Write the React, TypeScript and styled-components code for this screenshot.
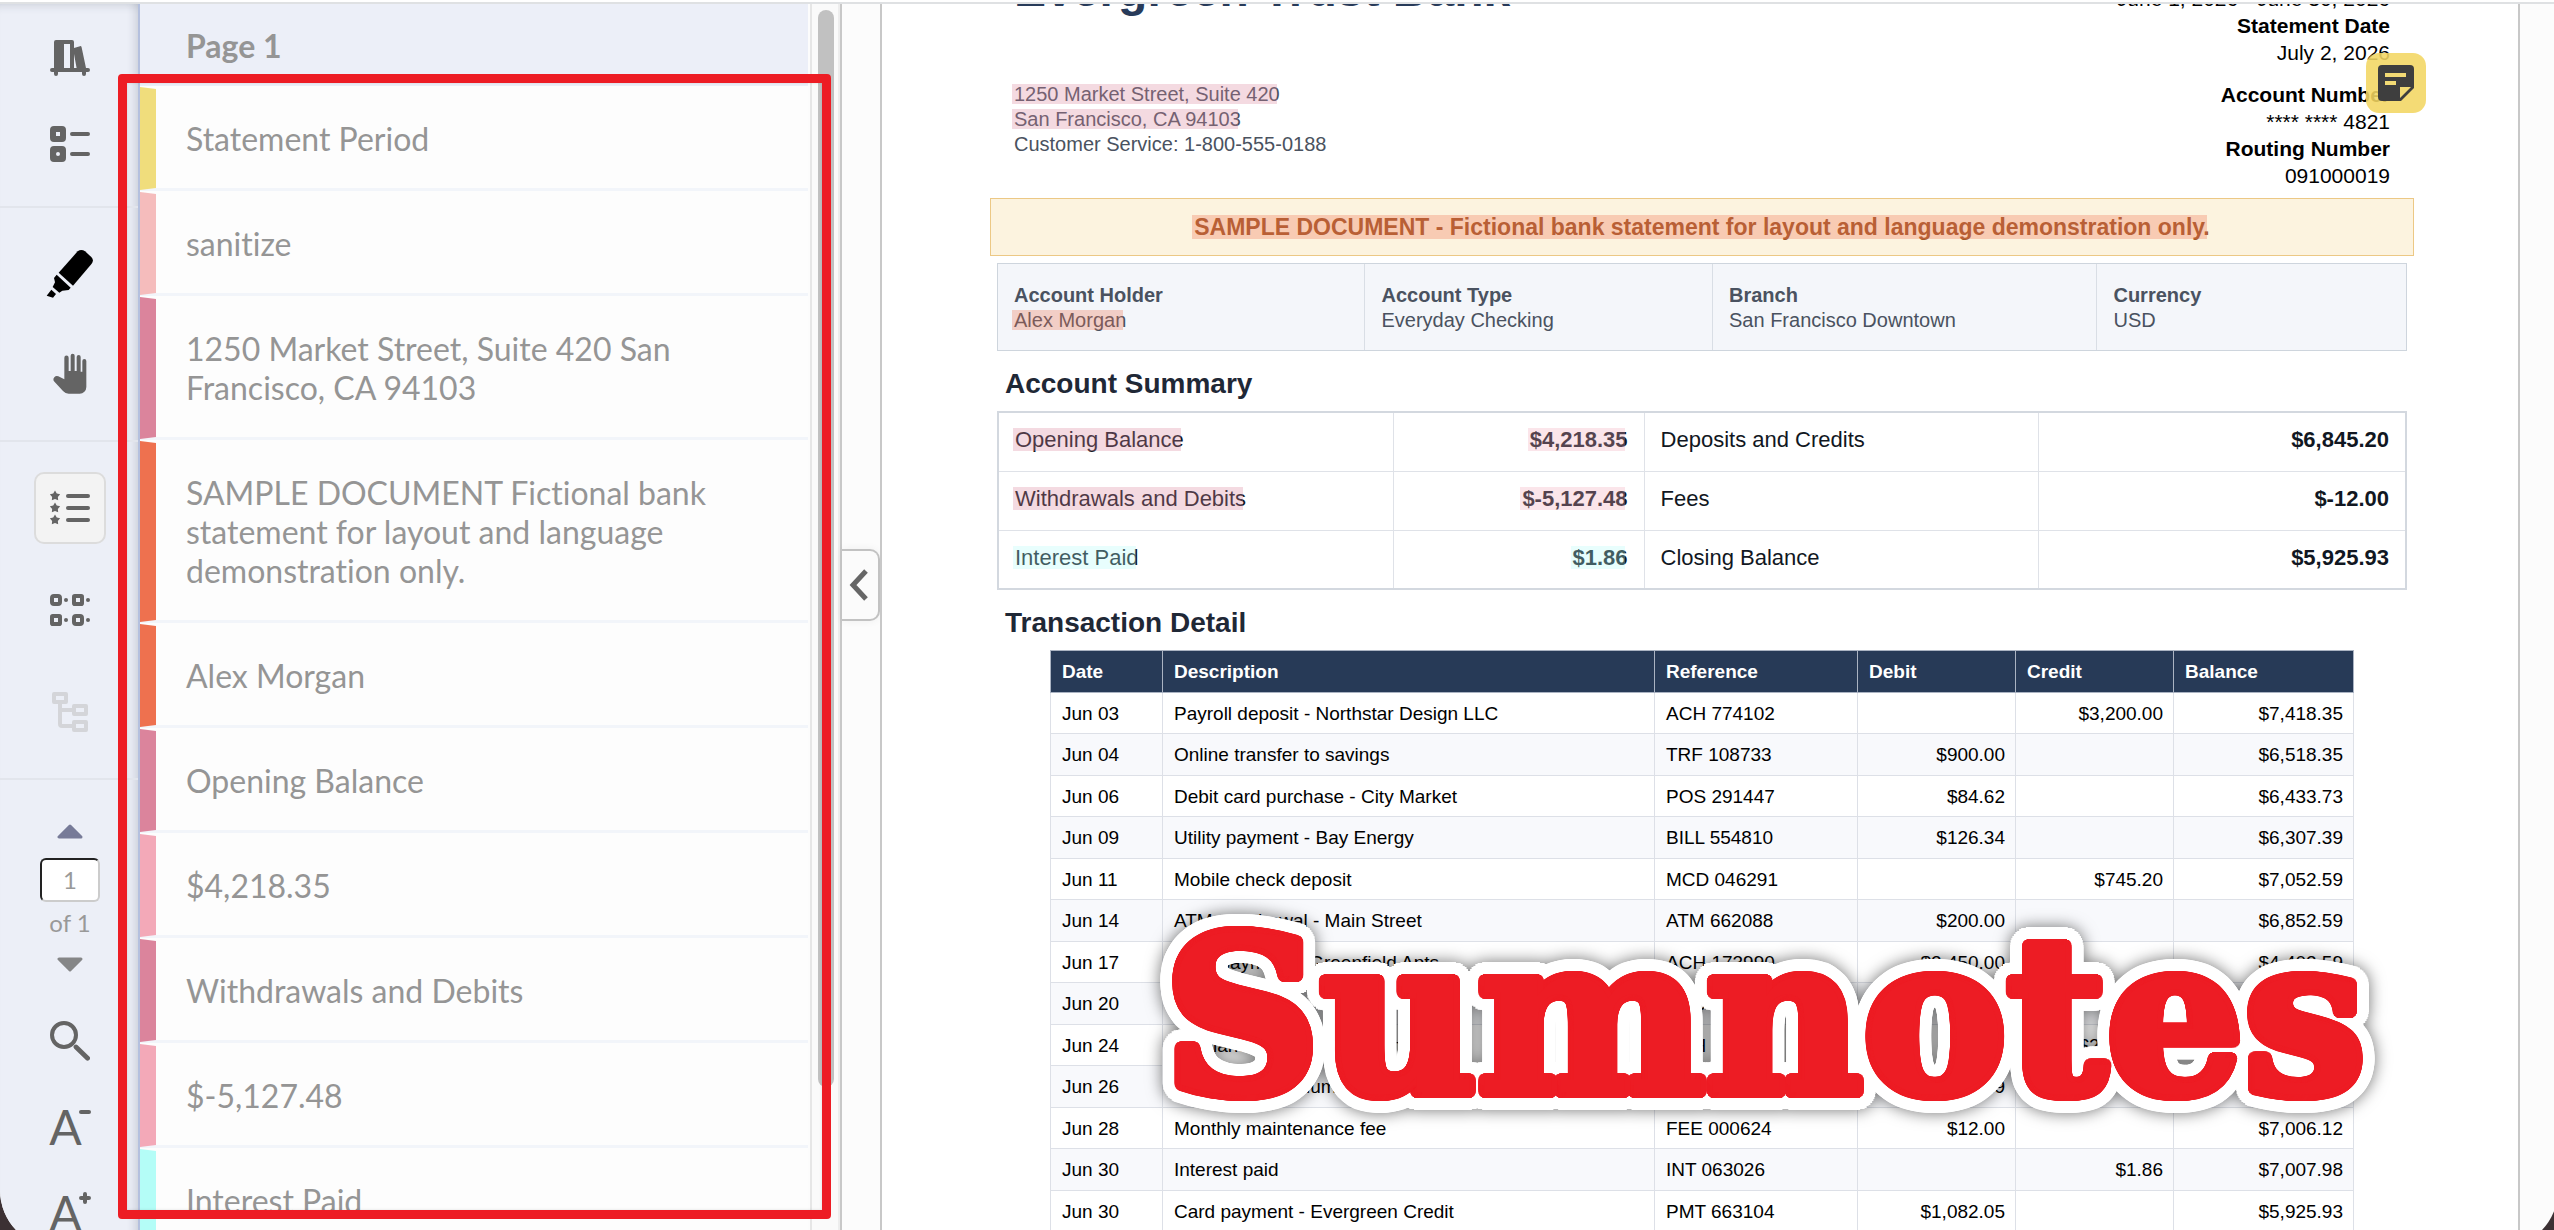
import React from 'react';
import styled, { createGlobalStyle } from 'styled-components';

const ui = "Lato, 'Open Sans', sans-serif";
const doc = "'Liberation Sans', Arial, sans-serif";

const GlobalStyle = createGlobalStyle`
  *, *::before, *::after { box-sizing: border-box; }
  body { margin: 0; background: #3c3134; font-family: ${ui}; font-variant-ligatures: none; }
  button, input { font: inherit; color: inherit; padding: 0; }
  h1, h2, h3, p, dl, dd, ul { margin: 0; padding: 0; }
`;

const Screen = styled.div`
  position: relative;
  height: 100vh;
  overflow: hidden;
`;

const Window = styled.div`
  display: flex;
  height: calc(100vh + 18px);
  margin-right: -4px;
  overflow: hidden;
  border-radius: 0 0 58px 58px;
  background: #fcfcfc;
  border-top: 2px solid #fff;
`;

const Body = styled.div`
  display: flex;
  flex: 1;
  min-width: 0;
  border-top: 2px solid #dfe1e3;
`;

/* ---------- tool bar ---------- */

const Toolbar = styled.nav`
  flex: none;
  width: 140px;
  background: #eceff7;
  border-right: 2px solid #b4c0de;
  box-shadow: inset -9px 0 9px -6px rgba(40, 50, 70, 0.16), inset 0 9px 9px -7px rgba(40, 50, 70, 0.14);
  color: #646464;
`;

const ToolGroup = styled.div<{ $top: number; $gap: number; $bottom?: number }>`
  display: flex;
  flex-direction: column;
  align-items: center;
  gap: ${p => p.$gap}px;
  padding: ${p => p.$top}px 0 ${p => p.$bottom ?? 30}px 2px;
  border-bottom: ${p => (p.$bottom === 0 ? 'none' : '2px solid #e2e5ec')};
`;

const ToolButton = styled.button<{ $active?: boolean; $color?: string }>`
  display: flex;
  align-items: center;
  justify-content: center;
  width: 72px;
  height: 72px;
  border: 2px solid ${p => (p.$active ? '#dcdcdc' : 'transparent')};
  border-radius: 10px;
  background: ${p => (p.$active ? '#f3f3f3' : 'transparent')};
  color: ${p => p.$color ?? 'inherit'};
`;

const Pager = styled.div`
  display: flex;
  flex-direction: column;
  align-items: center;
  gap: 7px;
  padding: 31px 0 21px 2px;
  font-size: 24px;
  line-height: 28px;
  color: #999;
`;

const ArrowButton = styled.button<{ $color: string }>`
  display: flex;
  align-items: center;
  justify-content: center;
  width: 60px;
  height: 40px;
  border: 0;
  background: none;
  color: ${p => p.$color};
`;

const PageInput = styled.input`
  width: 60px;
  height: 44px;
  padding-bottom: 2px;
  border: 2px solid #222;
  border-right-color: #ccc;
  border-bottom-color: #ccc;
  border-radius: 6px;
  background: #fff;
  text-align: center;
`;

const LetterIcon = styled.span`
  display: flex;
  align-items: flex-start;
  font-size: 48px;
  line-height: 48px;
  svg { margin: 3px 0 0 -3px; }
`;

/* ---------- annotation list ---------- */

const Panel = styled.aside`
  display: flex;
  flex: none;
  width: 702px;
  overflow: hidden;
  border-right: 2px solid #c8c8c8;
`;

const List = styled.div`
  flex: 1;
  min-width: 0;
  font-size: 32px;
  line-height: 39px;
  color: #959595;
`;

const ListHeader = styled.h2`
  padding: 22px 46px 21px;
  background: #eceff8;
  font-size: 32px;
  line-height: 39px;
`;

const Items = styled.ul`
  list-style: none;
`;

const Item = styled.li<{ $color: string }>`
  display: flex;
  background: #fdfdfd;
  border-bottom: 3px solid #f2f5fa;
  &::before {
    content: '';
    flex: none;
    width: 16px;
    margin: 1px 0 -2px;
    background: ${p => p.$color};
    clip-path: polygon(0 0, 100% 2px, 100% calc(100% - 2px), 0 100%);
  }
`;

const ItemText = styled.p`
  padding: 33px 46px 30px 30px;
`;

const ScrollTrack = styled.div`
  flex: none;
  width: 30px;
  padding: 6px 0 0 6px;
  margin-left: 2px;
  border-left: 2px solid #e6e6e6;
  border-right: 2px solid #ededed;
  background: #fafafa;
`;

const ScrollThumb = styled.div`
  width: 16px;
  height: 87%;
  border-radius: 8px;
  background: #c1c1c1;
`;

const Gutter = styled.div`
  flex: none;
  width: 38px;
  padding-top: 545px;
`;

const CollapseButton = styled.button`
  display: flex;
  align-items: center;
  justify-content: center;
  width: 38px;
  height: 72px;
  padding-right: 2px;
  border: 2px solid #c2c2c2;
  border-left: 0;
  border-radius: 0 10px 10px 0;
  background: #fbfbfb;
  color: #666;
  box-shadow: 0 0 8px rgba(0, 0, 0, 0.06);
`;

/* ---------- document ---------- */

const Viewer = styled.main`
  flex: 1;
  min-width: 0;
  overflow: hidden;
  padding-right: 38px;
`;

const Page = styled.article`
  position: relative;
  margin-top: -106px;
  padding: 60px 111px 80px 115px;
  border: 2px solid #c8c8c8;
  border-top: 0;
  background: #fff;
  font-family: ${doc};
  font-size: 20px;
  line-height: 25px;
  color: #4a5260;
`;

const DocHeader = styled.header`
  display: flex;
  justify-content: space-between;
  padding: 0 17px 9px;
`;

const BankName = styled.h1`
  margin: 4px 0 64px;
  font-size: 48px;
  line-height: 56px;
  color: #283b5a;
`;

const Meta = styled.dl`
  font-size: 21px;
  line-height: 27px;
  color: #000;
  text-align: right;
  dt { font-weight: bold; }
`;

const MetaGroup = styled.div`
  & + & { margin-top: 15px; }
`;

const Mark = styled.mark<{ $tint: string }>`
  position: relative;
  background: none;
  color: inherit;
  &::after {
    content: '';
    position: absolute;
    inset: 1px 3px 1px -2px;
    background: ${p => p.$tint};
  }
`;

const NotePin = styled.button`
  position: absolute;
  top: 155px;
  right: 92px;
  display: flex;
  align-items: center;
  justify-content: center;
  width: 60px;
  height: 60px;
  border: 0;
  border-radius: 13px;
  background: rgba(242, 214, 98, 0.88);
  color: #3e3e3e;
`;

const Banner = styled.p`
  margin: 0 -7px 7px;
  padding: 15px 0;
  border: 1px solid #ecc885;
  background: #fcf3df;
  font-size: 23px;
  line-height: 26px;
  font-weight: bold;
  text-align: center;
  color: #a2582a;
`;

const InfoGrid = styled.dl`
  display: grid;
  grid-template-columns: 367fr 348fr 385fr 310fr;
  border: 1px solid #ced5dd;
  background: #f4f6fa;
  dt { font-weight: bold; }
`;

const InfoCell = styled.div`
  padding: 19px 16px 17px;
  & + & { border-left: 1px solid #d9dee5; }
`;

const SectionTitle = styled.h3`
  margin: 17px 8px 11px;
  font-size: 28px;
  line-height: 32px;
  color: #1f2836;
`;

const SummaryTable = styled.table`
  width: 100%;
  table-layout: fixed;
  border-collapse: collapse;
  border: 2px solid #d3d8df;
  font-size: 22px;
  line-height: 26px;
  color: #111722;
  th, td { height: 59px; padding: 0 16px 3px; border: 1px solid #dfe2e8; }
  th { font-weight: normal; text-align: left; }
  td { font-weight: bold; text-align: right; }
`;

const LedgerWrap = styled.div`
  padding: 0 53px;
`;

const Ledger = styled.table`
  width: 100%;
  table-layout: fixed;
  border-collapse: collapse;
  font-size: 19px;
  line-height: 22px;
  color: #000;
  th, td { height: 42px; padding: 1px 10px 0 11px; border: 1px solid #dde0e7; text-align: left; white-space: nowrap; }
  tbody tr:nth-child(even) { background: #f8f9fc; }
  tbody tr:nth-child(odd) td { height: 41px; }
  thead th { background: #273a57; color: #fff; border-color: #aab3c2; }
  td:nth-child(n + 4) { text-align: right; }
`;

/* ---------- overlays ---------- */

const Frame = styled.div`
  position: absolute;
  left: 118px;
  top: 74px;
  bottom: 11px;
  width: 713px;
  border: 9px solid #ed1c24;
  border-radius: 4px;
  pointer-events: none;
  box-shadow: inset 0 0 3px rgba(0, 0, 0, 0.12);
`;

/* A ring of hard shadows thickens the letters evenly and rounds their corners. */
const ring = (radius: number, color: string) =>
  Array.from({ length: 48 }, (_, i) => {
    const a = (i / 48) * Math.PI * 2;
    return `${(Math.cos(a) * radius).toFixed(1)}px ${(Math.sin(a) * radius).toFixed(1)}px 0 ${color}`;
  }).join(', ');

const Wordmark = styled.div`
  position: absolute;
  left: 1164px;
  bottom: 94px;
  font-family: 'DejaVu Serif', serif;
  font-weight: bold;
  font-size: 216px;
  line-height: 240px;
  color: #ed1c24;
  text-shadow: ${ring(6, '#ed1c24')}, ${ring(18, '#fff')};
  filter: drop-shadow(0 0 8px rgba(0, 0, 0, 0.55));
  pointer-events: none;
`;

/* ---------- icons ---------- */

const BooksIcon = () => (
  <svg width="40" height="40" viewBox="0 0 20 20" fill="currentColor">
    <path fillRule="evenodd" d="M3 1h8a1 1 0 0 1 1 1v3l3-.9q.6-.2.8.5L18 15h1a1 1 0 0 1 0 2h-1v1a1 1 0 0 1-2 0v-1H4v1a1 1 0 0 1-2 0v-1H1a1 1 0 0 1 0-2h1V2a1 1 0 0 1 1-1zM7 3v12h3V3zM12 8v7h1.3z" />
  </svg>
);

const ListIcon = () => (
  <svg width="40" height="40" viewBox="0 0 20 20" fill="currentColor">
    <path fillRule="evenodd" d="M2 1h4a2 2 0 0 1 2 2v4a2 2 0 0 1-2 2H2a2 2 0 0 1-2-2V3a2 2 0 0 1 2-2zM3 4v2h2V4zM2 11h4a2 2 0 0 1 2 2v4a2 2 0 0 1-2 2H2a2 2 0 0 1-2-2v-4a2 2 0 0 1 2-2zM4 14a1 1 0 1 0 0 2a1 1 0 0 0 0-2z" />
    <path d="M11 5h8M11 15h8" stroke="currentColor" strokeWidth="2" strokeLinecap="round" />
  </svg>
);

const HighlighterIcon = () => (
  <svg width="48" height="50" viewBox="139 747 144 150" fill="currentColor">
    <path d="M234 754Q245 746 256 754L275 771Q284 781 276 791L220 857L177 818Z" />
    <path d="M171 824L213 863L207 870L188 872L179 878L159 861L166 847L163 834Z" />
    <path d="M155 869L169 882L160 893L141 887Z" />
  </svg>
);

const HandIcon = () => (
  <svg width="34" height="42" viewBox="158 1060 102 126" fill="currentColor">
    <path d="M192 1074a6 6 0 0 1 13 0v40h6v-46a6 6 0 0 1 12 0v46h6v-42a6 6 0 0 1 12 0v44h5v-32a6 6 0 0 1 12 0v78a20 20 0 0 1-20 20h-33q-10 0-17-8l-27-29q-4-6 1-12t12-3l18 9z" />
  </svg>
);

const star = (y: number) =>
  Array.from({ length: 10 }, (_, i) => {
    const r = i % 2 ? 1.5 : 2.7;
    const a = -Math.PI / 2 + (i * Math.PI) / 5;
    return `${2.5 + r * Math.cos(a)},${y + r * Math.sin(a)}`;
  }).join(' ');

const StarListIcon = () => (
  <svg width="40" height="40" viewBox="0 0 20 20" fill="currentColor">
    {[4, 10, 16].map(y => (
      <g key={y}>
        <polygon points={star(y)} />
        <path d={`M9 ${y}h10`} stroke="currentColor" strokeWidth="2" strokeLinecap="round" />
      </g>
    ))}
  </svg>
);

const GridIcon = () => (
  <svg width="40" height="40" viewBox="0 0 20 20" fill="none" stroke="currentColor" strokeWidth="2">
    {[[1, 3], [12, 3], [1, 13], [12, 13]].map(([x, y], i) => (
      <g key={i}>
        <rect x={x} y={y} width="4" height="4" rx={i % 3 ? 0.4 : 1} />
        <circle cx={x + 7} cy={y + 2} r="1" fill="currentColor" stroke="none" />
      </g>
    ))}
  </svg>
);

const TreeIcon = () => (
  <svg width="40" height="40" viewBox="0 0 20 20" fill="none" stroke="currentColor" strokeWidth="2" strokeLinejoin="round">
    <rect x="2" y="1" width="6" height="4" />
    <rect x="12" y="7" width="6" height="4" />
    <rect x="12" y="15" width="6" height="4" />
    <path d="M5 5v11q0 1 1 1h6M5 9h7" />
  </svg>
);

const Triangle = ({ down }: { down?: boolean }) => (
  <svg width="26" height="15" viewBox="0 0 26 15">
    <path d={down ? 'M2 2H24L13 13Z' : 'M2 13H24L13 2Z'} fill="currentColor" stroke="currentColor" strokeWidth="3" strokeLinejoin="round" />
  </svg>
);

const SearchIcon = () => (
  <svg width="40" height="40" viewBox="0 0 20 20" fill="none" stroke="currentColor" strokeLinecap="round">
    <circle cx="7" cy="7" r="6" strokeWidth="2" />
    <path d="M13 13l5.8 5.6" strokeWidth="2.4" />
  </svg>
);

const Sign = ({ plus }: { plus?: boolean }) => (
  <svg width="12" height="12" viewBox="0 0 12 12" stroke="currentColor" strokeWidth="4" strokeLinecap="round">
    <path d={plus ? 'M2 6h8M6 2v8' : 'M2 6h8'} />
  </svg>
);

const Chevron = () => (
  <svg width="20" height="32" viewBox="0 0 20 32" fill="none" stroke="currentColor" strokeWidth="5">
    <path d="M17 2L4 16L17 30" />
  </svg>
);

const NoteIcon = () => (
  <svg width="38" height="38" viewBox="0 0 38 38">
    <path fill="currentColor" d="M5 1h28a4 4 0 0 1 4 4v19L24 37H5a4 4 0 0 1-4-4V5a4 4 0 0 1 4-4z" />
    <path fill="#f2da74" d="M8 9h21v4H8zM8 17h11v4H8zM23 23h11L23 34z" />
  </svg>
);

/* ---------- data ---------- */

const annotations: [string, string][] = [
  ['Statement Period', '#f0dd7c'],
  ['sanitize', '#f5bcbc'],
  ['1250 Market Street, Suite 420 San Francisco, CA 94103', '#db849c'],
  ['SAMPLE DOCUMENT Fictional bank statement for layout and language demonstration only.', '#ee714f'],
  ['Alex Morgan', '#ee714f'],
  ['Opening Balance', '#db849c'],
  ['$4,218.35', '#f3a9b8'],
  ['Withdrawals and Debits', '#db849c'],
  ['$-5,127.48', '#f3a9b8'],
  ['Interest Paid', '#b4fdf7'],
];

const rose = 'rgba(219, 132, 156, 0.3)';
const pink = 'rgba(243, 169, 184, 0.3)';
const coral = 'rgba(238, 113, 79, 0.3)';
const aqua = 'rgba(180, 253, 247, 0.3)';

const summary: [string, string, string, string, string, string][] = [
  ['Opening Balance', '$4,218.35', 'Deposits and Credits', '$6,845.20', rose, pink],
  ['Withdrawals and Debits', '$-5,127.48', 'Fees', '$-12.00', rose, pink],
  ['Interest Paid', '$1.86', 'Closing Balance', '$5,925.93', aqua, aqua],
];

const ledger = [
  ['Jun 03', 'Payroll deposit - Northstar Design LLC', 'ACH 774102', '', '$3,200.00', '$7,418.35'],
  ['Jun 04', 'Online transfer to savings', 'TRF 108733', '$900.00', '', '$6,518.35'],
  ['Jun 06', 'Debit card purchase - City Market', 'POS 291447', '$84.62', '', '$6,433.73'],
  ['Jun 09', 'Utility payment - Bay Energy', 'BILL 554810', '$126.34', '', '$6,307.39'],
  ['Jun 11', 'Mobile check deposit', 'MCD 046291', '', '$745.20', '$7,052.59'],
  ['Jun 14', 'ATM withdrawal - Main Street', 'ATM 662088', '$200.00', '', '$6,852.59'],
  ['Jun 17', 'Rent payment - Greenfield Apts', 'ACH 173990', '$2,450.00', '', '$4,402.59'],
  ['Jun 20', 'Grocery store', 'POS 118204', '$86.18', '', '$4,316.41'],
  ['Jun 24', 'Freelance payment - Bloom Studio', 'ACH 420815', '', '$2,900.00', '$7,216.41'],
  ['Jun 26', 'Insurance premium', 'INS 552018', '$198.29', '', '$7,018.12'],
  ['Jun 28', 'Monthly maintenance fee', 'FEE 000624', '$12.00', '', '$7,006.12'],
  ['Jun 30', 'Interest paid', 'INT 063026', '', '$1.86', '$7,007.98'],
  ['Jun 30', 'Card payment - Evergreen Credit', 'PMT 663104', '$1,082.05', '', '$5,925.93'],
];

export default function App() {
  return (
    <Screen>
      <GlobalStyle />
      <Window>
        <Body>
          <Toolbar aria-label="Tools">
            <ToolGroup $top={18} $gap={14} $bottom={26}>
              <ToolButton aria-label="Library"><BooksIcon /></ToolButton>
              <ToolButton aria-label="Contents"><ListIcon /></ToolButton>
            </ToolGroup>
            <ToolGroup $top={30} $gap={28}>
              <ToolButton aria-label="Highlight" $color="#000"><HighlighterIcon /></ToolButton>
              <ToolButton aria-label="Pan"><HandIcon /></ToolButton>
            </ToolGroup>
            <ToolGroup $top={30} $gap={30}>
              <ToolButton aria-label="Annotation list" $active><StarListIcon /></ToolButton>
              <ToolButton aria-label="Grid"><GridIcon /></ToolButton>
              <ToolButton aria-label="Outline" $color="#d4d5d9"><TreeIcon /></ToolButton>
            </ToolGroup>
            <Pager>
              <ArrowButton aria-label="Previous page" $color="#777b98"><Triangle /></ArrowButton>
              <PageInput aria-label="Page number" defaultValue="1" />
              <span>of 1</span>
              <ArrowButton aria-label="Next page" $color="#858687"><Triangle down /></ArrowButton>
            </Pager>
            <ToolGroup $top={0} $gap={14} $bottom={0}>
              <ToolButton aria-label="Search"><SearchIcon /></ToolButton>
              <ToolButton aria-label="Smaller text"><LetterIcon>A<Sign /></LetterIcon></ToolButton>
              <ToolButton aria-label="Larger text"><LetterIcon>A<Sign plus /></LetterIcon></ToolButton>
            </ToolGroup>
          </Toolbar>

          <Panel>
            <List>
              <ListHeader>Page 1</ListHeader>
              <Items>
                {annotations.map(([text, color]) => (
                  <Item key={text} $color={color}><ItemText>{text}</ItemText></Item>
                ))}
              </Items>
            </List>
            <ScrollTrack><ScrollThumb /></ScrollTrack>
          </Panel>

          <Gutter>
            <CollapseButton aria-label="Collapse panel"><Chevron /></CollapseButton>
          </Gutter>

          <Viewer>
            <Page>
              <DocHeader>
                <div>
                  <BankName>Evergreen Trust Bank</BankName>
                  <p><Mark $tint={rose}>1250 Market Street, Suite 420</Mark></p>
                  <p><Mark $tint={rose}>San Francisco, CA 94103</Mark></p>
                  <p>Customer Service: 1-800-555-0188</p>
                </div>
                <Meta>
                  <MetaGroup>
                    <dt>Statement Period</dt>
                    <dd>June 1, 2026 - June 30, 2026</dd>
                    <dt>Statement Date</dt>
                    <dd>July 2, 2026</dd>
                  </MetaGroup>
                  <MetaGroup>
                    <dt>Account Number</dt>
                    <dd>**** **** 4821</dd>
                    <dt>Routing Number</dt>
                    <dd>091000019</dd>
                  </MetaGroup>
                </Meta>
              </DocHeader>
              <Banner>
                <Mark $tint={coral}>SAMPLE DOCUMENT - Fictional bank statement for layout and language demonstration only.</Mark>
              </Banner>
              <InfoGrid>
                <InfoCell><dt>Account Holder</dt><dd><Mark $tint={coral}>Alex Morgan</Mark></dd></InfoCell>
                <InfoCell><dt>Account Type</dt><dd>Everyday Checking</dd></InfoCell>
                <InfoCell><dt>Branch</dt><dd>San Francisco Downtown</dd></InfoCell>
                <InfoCell><dt>Currency</dt><dd>USD</dd></InfoCell>
              </InfoGrid>

              <SectionTitle>Account Summary</SectionTitle>
              <SummaryTable>
                <colgroup>
                  {[396, 251, 395, 368].map((w, i) => <col key={i} style={{ width: `${(w / 1410) * 100}%` }} />)}
                </colgroup>
                <tbody>
                  {summary.map(([a, b, c, d, t1, t2]) => (
                    <tr key={a}>
                      <th scope="row"><Mark $tint={t1}>{a}</Mark></th>
                      <td><Mark $tint={t2}>{b}</Mark></td>
                      <th scope="row">{c}</th>
                      <td>{d}</td>
                    </tr>
                  ))}
                </tbody>
              </SummaryTable>

              <SectionTitle>Transaction Detail</SectionTitle>
              <LedgerWrap>
                <Ledger>
                  <colgroup>
                    {[112, 492, 203, 158, 158, 180].map((w, i) => <col key={i} style={{ width: `${(w / 1303) * 100}%` }} />)}
                  </colgroup>
                  <thead>
                    <tr>
                      {['Date', 'Description', 'Reference', 'Debit', 'Credit', 'Balance'].map(h => <th key={h} scope="col">{h}</th>)}
                    </tr>
                  </thead>
                  <tbody>
                    {ledger.map(row => (
                      <tr key={row[2]}>{row.map((cell, i) => <td key={i}>{cell}</td>)}</tr>
                    ))}
                  </tbody>
                </Ledger>
              </LedgerWrap>
              <NotePin aria-label="Sticky note"><NoteIcon /></NotePin>
            </Page>
          </Viewer>
        </Body>
      </Window>
      <Frame />
      <Wordmark>Sumnotes</Wordmark>
    </Screen>
  );
}
